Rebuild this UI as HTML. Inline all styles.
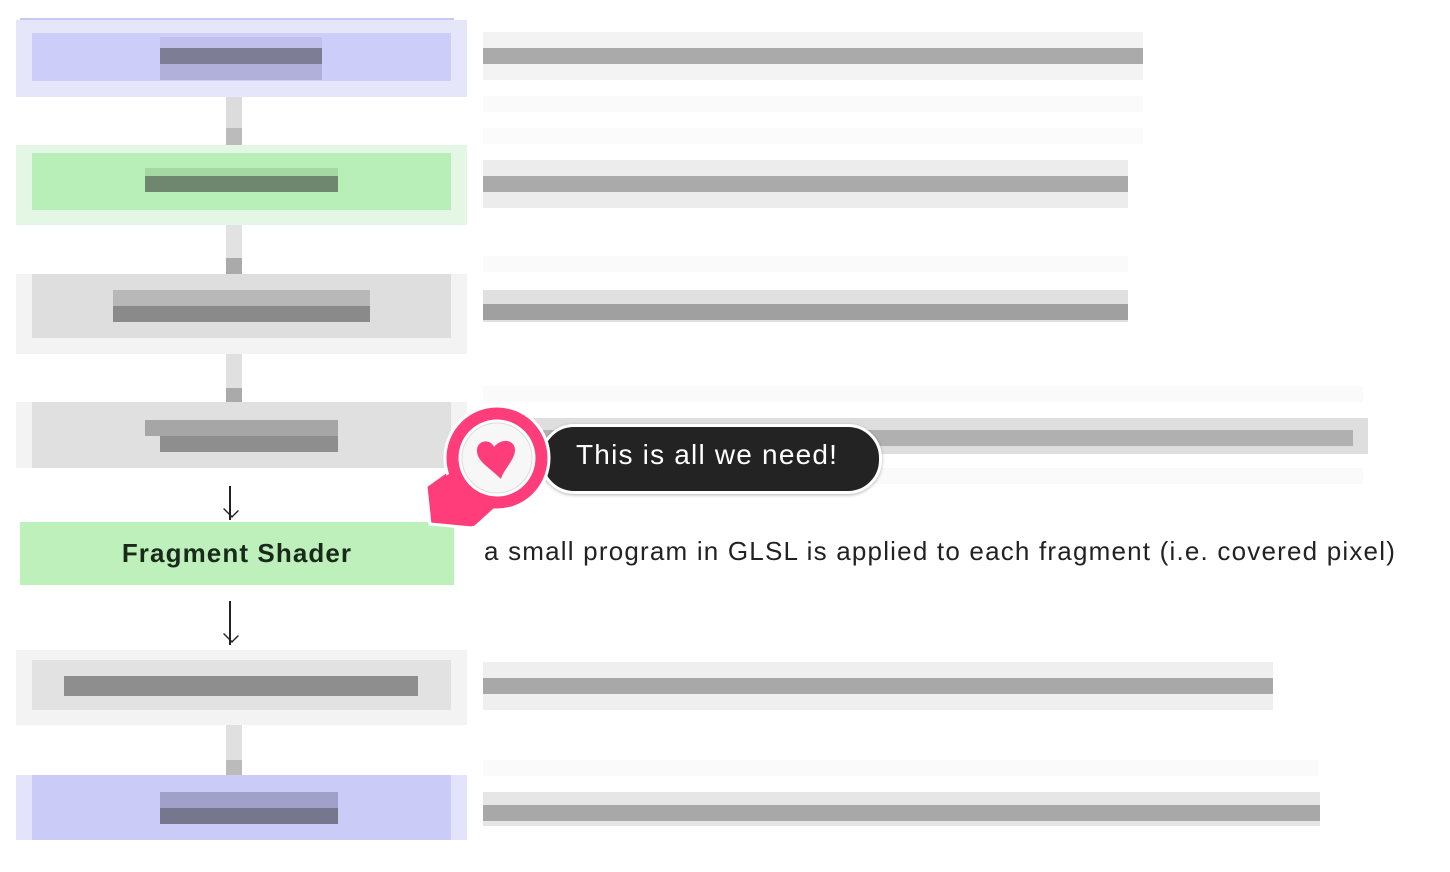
<!DOCTYPE html>
<html><head><meta charset="utf-8"><style>
body{margin:0;width:1450px;height:872px;background:#fff;position:relative;overflow:hidden;font-family:"Liberation Sans",sans-serif}
div{position:absolute}
.o{left:16px;width:451px}
.c{left:32px;width:419px}
</style></head><body>
<div class="o" style="top:18px;height:2px;background:#c8c8f6;left:20px;width:434px"></div>
<div class="o" style="top:20px;height:77px;background:#e6e6fb"></div>
<div class="c" style="top:33px;height:48px;background:#cdcdf9"></div>
<div style="left:160px;top:37px;width:162px;height:11px;background:#c0c0ea"></div>
<div style="left:160px;top:48px;width:162px;height:16px;background:#7d7d95"></div>
<div style="left:160px;top:64px;width:162px;height:16px;background:#b0b0da"></div>
<div style="left:226px;top:97px;width:16px;height:50px;background:#dcdcdc"></div>
<div style="left:226px;top:128px;width:16px;height:18px;background:#bbb"></div>
<div class="o" style="top:145px;height:80px;background:#e4f7e4"></div>
<div class="c" style="top:153px;height:57px;background:#b8eeb8"></div>
<div style="left:145px;top:168px;width:193px;height:8px;background:#a6d8a6"></div>
<div style="left:145px;top:176px;width:193px;height:16px;background:#6e876e"></div>
<div style="left:226px;top:225px;width:16px;height:50px;background:#e2e2e2"></div>
<div style="left:226px;top:258px;width:16px;height:16px;background:#aaa"></div>
<div class="o" style="top:274px;height:80px;background:#f3f3f3"></div>
<div class="c" style="top:274px;height:64px;background:#dedede"></div>
<div style="left:113px;top:290px;width:257px;height:16px;background:#b8b8b8"></div>
<div style="left:113px;top:306px;width:257px;height:16px;background:#8a8a8a"></div>
<div style="left:226px;top:354px;width:16px;height:48px;background:#e0e0e0"></div>
<div style="left:226px;top:388px;width:16px;height:14px;background:#aaa"></div>
<div class="o" style="top:402px;height:66px;background:#f3f3f3"></div>
<div class="c" style="top:402px;height:66px;background:#e0e0e0"></div>
<div style="left:145px;top:420px;width:193px;height:16px;background:#a6a6a6"></div>
<div style="left:160px;top:436px;width:178px;height:16px;background:#8e8e8e"></div>
<div style="left:229px;top:486px;width:2px;height:34px;background:#222"></div>
<div style="width:16px;height:12px;border-bottom:2px solid #222;border-right:2px solid #222;transform:rotate(45deg) scale(0.7);left:222px;top:503px"></div>
<div style="left:20px;top:522px;width:434px;height:63px;background:#bdf0bb;font-weight:bold;font-size:26px;letter-spacing:1.1px;color:#1a2a1a;line-height:63px;text-align:center">Fragment Shader</div>
<div style="left:484px;top:536px;font-size:26px;letter-spacing:1.2px;color:#222;white-space:nowrap">a small program in GLSL is applied to each fragment (i.e. covered pixel)</div>
<div style="left:229px;top:601px;width:2px;height:44px;background:#222"></div>
<div style="width:16px;height:12px;border-bottom:2px solid #222;border-right:2px solid #222;transform:rotate(45deg) scale(0.7);left:222px;top:628px"></div>
<div class="o" style="top:650px;height:75px;background:#f3f3f3"></div>
<div class="c" style="top:660px;height:50px;background:#e2e2e2"></div>
<div style="left:64px;top:676px;width:354px;height:20px;background:#8e8e8e"></div>
<div style="left:226px;top:725px;width:16px;height:50px;background:#e0e0e0"></div>
<div style="left:226px;top:760px;width:16px;height:15px;background:#bbb"></div>
<div class="o" style="top:775px;height:65px;background:#e3e3fb"></div>
<div class="c" style="top:775px;height:65px;background:#cbcbf8"></div>
<div style="left:160px;top:792px;width:178px;height:16px;background:#a0a0c8"></div>
<div style="left:160px;top:808px;width:178px;height:16px;background:#76768e"></div>
<div style="left:483px;top:32px;width:660px;height:48px;background:#f3f3f3"></div>
<div style="left:483px;top:48px;width:660px;height:16px;background:#aaa"></div>
<div style="left:483px;top:96px;width:660px;height:16px;background:#fafafa"></div>
<div style="left:483px;top:128px;width:660px;height:16px;background:#fbfbfb"></div>
<div style="left:483px;top:160px;width:645px;height:48px;background:#ececec"></div>
<div style="left:483px;top:176px;width:645px;height:16px;background:#aaa"></div>
<div style="left:483px;top:256px;width:645px;height:16px;background:#fafafa"></div>
<div style="left:483px;top:290px;width:645px;height:32px;background:#e0e0e0"></div>
<div style="left:483px;top:304px;width:645px;height:16px;background:#a0a0a0"></div>
<div style="left:483px;top:386px;width:880px;height:16px;background:#fafafa"></div>
<div style="left:483px;top:418px;width:885px;height:36px;background:#dedede"></div>
<div style="left:483px;top:430px;width:870px;height:16px;background:#b0b0b0"></div>
<div style="left:483px;top:468px;width:880px;height:16px;background:#fafafa"></div>
<div style="left:483px;top:662px;width:790px;height:48px;background:#efefef"></div>
<div style="left:483px;top:678px;width:790px;height:16px;background:#a8a8a8"></div>
<div style="left:483px;top:760px;width:835px;height:16px;background:#fafafa"></div>
<div style="left:483px;top:792px;width:837px;height:34px;background:#e6e6e6"></div>
<div style="left:483px;top:805px;width:837px;height:16px;background:#a8a8a8"></div>
<div style="left:540px;top:424px;width:336px;height:64px;border-radius:34px;background:#232323;border:3px solid #fff;box-shadow:0 1px 3px rgba(0,0,0,.3)"></div>
<div style="left:576px;top:439px;font-size:28px;letter-spacing:1.2px;color:#fff;white-space:nowrap">This is all we need!</div>
<svg style="position:absolute;left:420px;top:400px" width="140" height="135" viewBox="0 0 140 135">
<path d="M6 86 L48 56 L72 110 L52 128 L10 124 Z" fill="#ff3d7b" stroke="#fff" stroke-width="3"/>
<circle cx="77" cy="58" r="52" fill="#ff3d7b" stroke="#fff" stroke-width="3"/>
<path d="M8 88 L50 60 L74 108 L54 126 L12 122 Z" fill="#ff3d7b"/>
<circle cx="77" cy="58" r="37" fill="#f7f7f7" stroke="#fff" stroke-width="3"/>
<circle cx="77" cy="58" r="35" fill="none" stroke="#ddd" stroke-width="1"/>
<path d="M74 47 C70 38 56 40 57 52 C58 62 70 68 81 79 C83 70 95 60 95 50 C95 40 82 37 74 47 Z" fill="#ff3d7b"/>
</svg>
</body></html>
